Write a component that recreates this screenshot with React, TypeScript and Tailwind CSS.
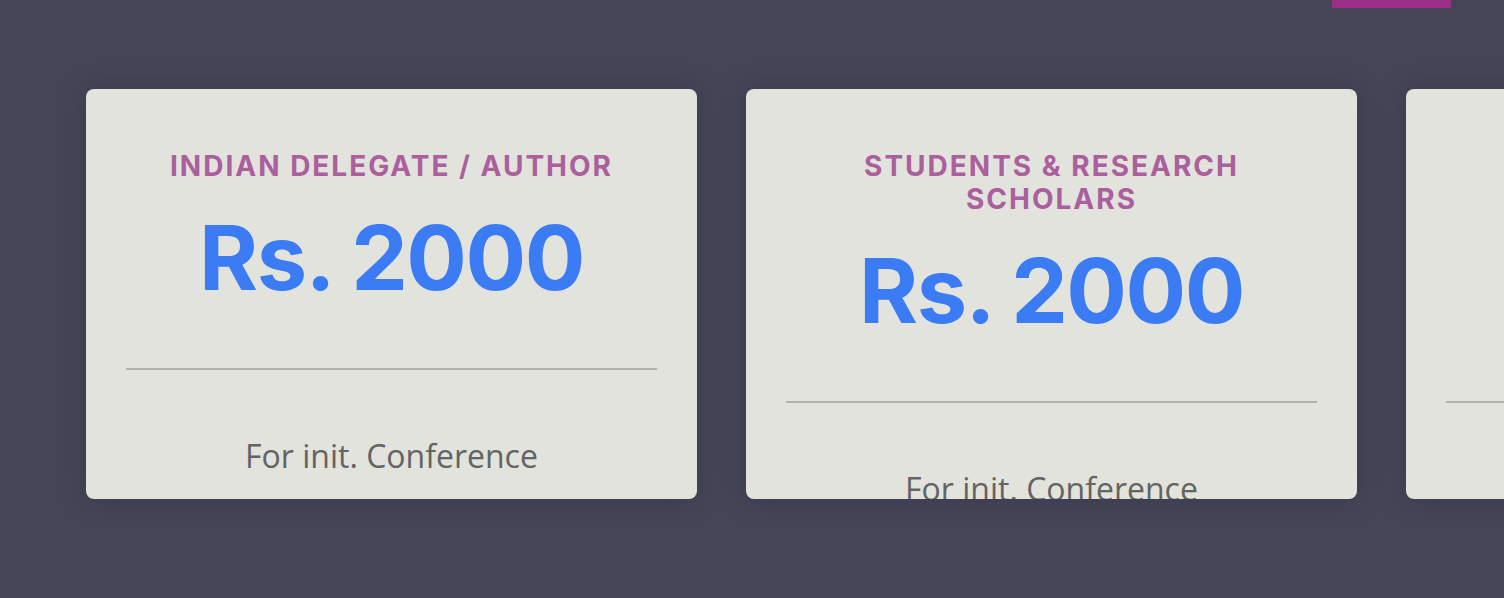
const plans = [
  { title: "INDIAN DELEGATE / AUTHOR", price: "Rs. 2000", note: "For init. Conference" },
  { title: "STUDENTS & RESEARCH SCHOLARS", price: "Rs. 2000", note: "For init. Conference" },
  { title: "FOREIGN DELEGATES / AUTHORS", price: "$ 100", note: "For init. Conference" },
];

const PlanCard = ({ title, price, note }: { title: string; price: string; note: string }) => (
  <div className="shrink-0 w-[611px] h-[410px] overflow-hidden rounded-[8px] bg-[#e2e3dc] shadow-[0_0_24px_rgba(40,40,55,0.35)] px-[40px] pt-[61px] flex flex-col items-center text-center">
    <h3 className="max-w-[470px] font-['Inter',sans-serif] font-bold text-[28px] leading-[33px] tracking-[2px] text-[#ab5f9c]">
      {title}
    </h3>
    <div className="mt-[30px] font-['Inter',sans-serif] font-bold text-[90px] leading-[90px] tracking-[-1.5px] text-[#3b7cf4]">
      {price}
    </div>
    <div className="mt-[65px] w-full h-[2px] shrink-0 bg-[#b1b2ac]" />
    <p className="mt-[64px] font-['Open_Sans',sans-serif] text-[32px] leading-[44px] text-[#636463]">{note}</p>
  </div>
);

export default function App() {
  return (
    <div className="w-[1504px] h-[598px] overflow-hidden bg-[#444658]">
      <div className="flex justify-end pr-[53px]">
        <div className="w-[119px] h-[8px] bg-[#9b2f86]" />
      </div>
      <div className="flex gap-[49px] pl-[86px] pt-[81px]">
        {plans.map((p) => (
          <PlanCard key={p.title} {...p} />
        ))}
      </div>
    </div>
  );
}
